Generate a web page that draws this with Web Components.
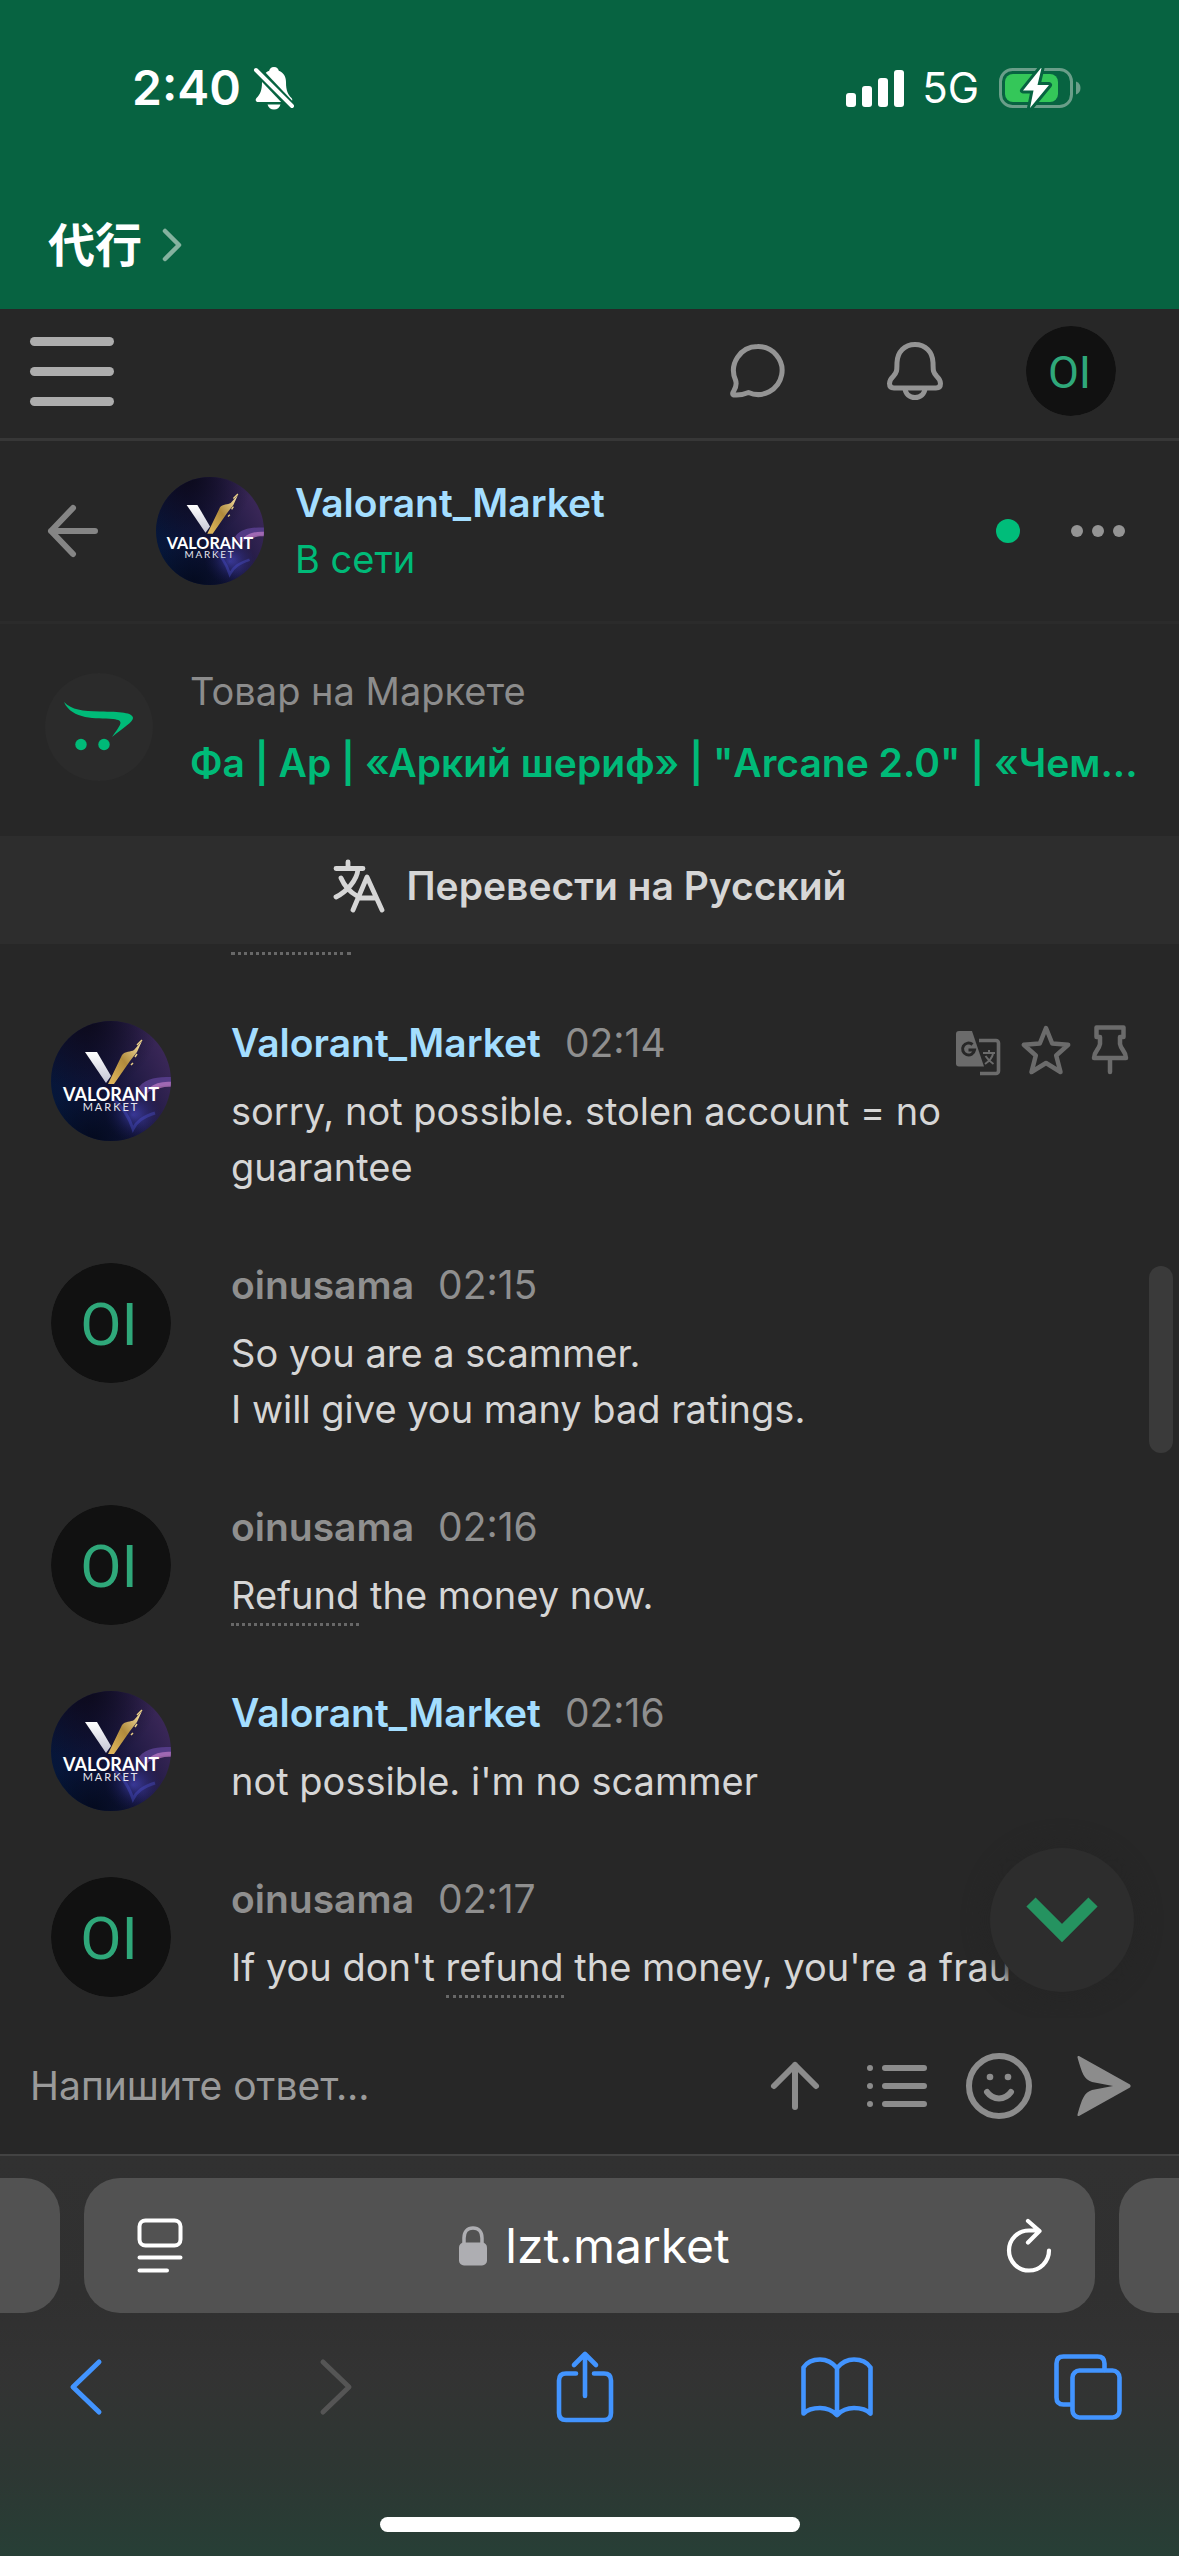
<!DOCTYPE html>
<html lang="ru">
<head>
<meta charset="utf-8">
<meta name="viewport" content="width=device-width, initial-scale=1">
<title>lzt.market</title>
<style>
  html, body { margin: 0; background: #272727; }
  body { font-family: Inter, "Noto Sans CJK JP", sans-serif; font-size: 38px; color: #d6d6d6; }
</style>
</head>
<body>
<market-app></market-app>

<script>
/* Every component writes its own markup and styles into an open shadow root. */
class Base extends HTMLElement {
  connectedCallback() {
    if (this.shadowRoot) return;
    const t = document.createElement('template');
    t.innerHTML = `<style>
      *, *::before { box-sizing: border-box; }
      :host { display: block; }
      button { font: inherit; color: inherit; background: none; border: 0; padding: 0; margin: 0; display: flex; align-items: center; cursor: pointer; }
      a { color: inherit; text-decoration: none; }
      ${this.css()}</style>${this.html()}`;
    this.attachShadow({ mode: 'open' }).append(t.content.cloneNode(true));
  }
  css() { return ''; }
  html() { return '<slot></slot>'; }
}

const line = (w, body) => `<g fill="none" stroke="currentColor" stroke-width="${w}" stroke-linecap="round" stroke-linejoin="round">${body}</g>`;
const ICONS = {
  mute: [42, 44, `<g fill="currentColor"><path d="M21 1c-3 0-4.500 2-4.800 3.800C11.500 6.600 9 10.500 9 16c0 9-2 12.500-5.500 16-1.500 1.600-.8 4 1.500 4h32c2.300 0 3-2.400 1.500-4C35 28.500 33 25 33 16c0-5.500-2.500-9.400-7.200-11.200C25.500 3 24 1 21 1z"/><path d="M14.500 38.500h13c-.8 3-3.300 5-6.500 5s-5.700-2-6.500-5z"/></g><path d="M3 3l36 38" stroke="#076341" stroke-width="9"/><path d="M3 4l36 36" stroke="currentColor" stroke-width="4" stroke-linecap="round"/>`],
  signal: [58, 38, `<g fill="currentColor"><rect y="24" width="10" height="14" rx="3"/><rect x="16" y="17" width="10" height="21" rx="3"/><rect x="32" y="9" width="10" height="29" rx="3"/><rect x="48" y="1" width="10" height="37" rx="3"/></g>`],
  battery: [82, 40, `<rect x="1.500" y="1.500" width="71" height="37" rx="12" fill="none" stroke="#6a9e89" stroke-width="3"/><path d="M77 13.500c3 1 4.500 3.500 4.500 6.500s-1.500 5.500-4.500 6.500z" fill="#6a9e89"/><rect x="6" y="6" width="53" height="28" rx="8" fill="#34c759"/><path d="M42 0L24 22.500h10.500L31 40l19-23H38.500L42.500 0z" fill="currentColor" stroke="#076341" stroke-width="6" stroke-linejoin="round" paint-order="stroke"/>`],
  chevSmall: [20, 34, line(4.500, '<path d="M3 3l14 14L3 31"/>')],
  menu: [84, 69, `<g fill="currentColor"><rect width="84" height="9" rx="4.500"/><rect y="30" width="84" height="9" rx="4.500"/><rect y="60" width="84" height="9" rx="4.500"/></g>`],
  chat: [54, 54, line(5, '<path d="M27.500 2.500A24 24 0 1 1 18.500 48.500C15 50 10 51.500 4 51 2 50.500 2.500 49 4 46.500 6 43 7 40 5.500 36A24 24 0 0 1 27.500 2.500z"/>')],
  bell: [56, 58, line(5, '<path d="M28 2.500c-10.500 0-17.500 7.500-18 18-.3 7.500.5 9-3.500 13.500C3 37.500 2.500 39.500 2.500 41.500c0 3 1.800 4.500 4.500 4.500h42c2.700 0 4.500-1.500 4.500-4.500 0-2-.5-4-4-7.500-4-4.500-3.200-6-3.500-13.500-.5-10.500-7.500-18-18-18z"/><path d="M18 46.500c.5 5.500 4.500 9 10 9s9.500-3.500 10-9"/>')],
  back: [52, 52, line(6, '<path d="M48 26H4M26 3L4 26l22 23"/>')],
  more: [54, 12, '<g fill="currentColor"><circle cx="6" cy="6" r="6"/><circle cx="27" cy="6" r="6"/><circle cx="48" cy="6" r="6"/></g>'],
  cart: [70, 50, '<g fill="currentColor"><path d="M0 0c8 8 18 9 36 9.500 20 .3 33 1 33 6.500 0 4-9 9-21 19 9-13 13-16.500 1-18C32 16 8 18 0 0z"/><circle cx="17" cy="42.500" r="5.700"/><circle cx="40" cy="42.500" r="5.700"/></g>'],
  lang: [52, 54, line(4.800, '<path d="M3 9.500h27M15 3v6M25 10C24 22 13 33 3 38M8 19c3 7 9 14 16 18M20 51L34 18l15 33M26 39h17"/>')],
  gtrans: [44, 44, `<path d="M3 0h13l12 35.500H3a3 3 0 0 1-3-3V3a3 3 0 0 1 3-3z" fill="currentColor"/><path d="M16.500 13.500a6 6 0 1 0 2 5.500H12.500" fill="none" stroke="#272727" stroke-width="3"/><path d="M23 9.500h17a2.500 2.500 0 0 1 2.500 2.500v28a2.500 2.500 0 0 1-2.500 2.500H24" fill="none" stroke="currentColor" stroke-width="3.600"/><path d="M27 22h12M33 19v3M37 23c-1 4-5 8-8 10M29.500 25c2 3 5 6 8 8" fill="none" stroke="currentColor" stroke-width="2"/>`],
  star: [50, 50, line(4.500, '<path d="M25 3l6.200 15.500 16 1.300-12 10.700 4.300 16.500L25 38 10.500 47l4.300-16.500-12-10.700 16-1.300z"/>')],
  pin: [36, 50, line(4.500, '<path d="M4.500 2.500h27V12H28v7c1 6 6 7 6 14H2c0-7 5-8 6-14v-7H4.500zM18 33v14"/>')],
  down: [74, 46, '<path d="M6 5l31 31L68 5" fill="none" stroke="currentColor" stroke-width="13"/>'],
  up: [48, 50, line(6, '<path d="M24 46V4M3 25L24 4l21 21"/>')],
  list: [60, 42, line(6, '<path d="M18 3h39M18 21h39M18 39h39M3 3h0M3 21h0M3 39h0"/>')],
  smile: [66, 66, line(6, '<circle cx="33" cy="33" r="30"/><path d="M21 39c6 8.500 18 8.500 24 0"/>') + '<g fill="currentColor"><circle cx="24" cy="24" r="3.300"/><circle cx="42" cy="24" r="3.300"/></g>'],
  send: [54, 62, '<path d="M2 1L53 29.500q1.500 1.500 0 3L2 61q-2 .5-1.500-1.500C5 44 7 37.500 15 35l21-4-21-4C7 24.500 5 18 .5 2.500Q0 .5 2 1z" fill="currentColor"/>'],
  page: [46, 56, line(4, '<rect x="2.500" y="2.500" width="41" height="25" rx="6"/><path d="M2.500 39.500h41M2.500 52.500H30"/>')],
  lock: [28, 40, '<rect y="16.500" width="28" height="23" rx="5" fill="currentColor"/><path d="M5 18v-6c0-6 3.500-10 9-10s9 4 9 10v6" fill="none" stroke="currentColor" stroke-width="3.500"/>'],
  reload: [46, 56, line(4.200, '<path d="M43 32.500A20 20 0 1 1 23 12.500H33M22 3l11.500 10L22 24.500"/>')],
  prev: [34, 56, line(5, '<path d="M30 3L4 28l26 25"/>')],
  next: [34, 56, line(5, '<path d="M4 3l26 25L4 53"/>')],
  share: [58, 72, line(4.600, '<path d="M20 22.500H10q-7 0-7 7v32.500q0 7 7 7h38q7 0 7-7V29.500q0-7-7-7H38M29 45V3M18 14L29 3l11 11"/>')],
  book: [72, 60, line(4.600, '<path d="M36 11C31 5 26 2.500 19 2.500S6 5 2.500 10.500v46C6 53 12 51 19 51s12 2 17 7c5-5 10-7 17-7s13 2 16.500 5.500v-46C66 5 60 2.500 53 2.500S41 5 36 11zM36 11v46"/>')],
  tabs: [68, 66, line(4.600, '<rect x="18.500" y="16.500" width="47" height="47" rx="7"/><path d="M50.500 16V9.500q0-7-7-7h-34q-7 0-7 7v34q0 7 7 7h8"/>')]
};

customElements.define('ui-icon', class extends Base {
  css() {
    const [w, h] = ICONS[this.getAttribute('name')];
    return `:host { display: block; flex: none; width: ${w}px; height: ${h}px; } svg { display: block; overflow: visible; }`;
  }
  html() {
    const [w, h, body] = ICONS[this.getAttribute('name')];
    return `<svg width="${w}" height="${h}" viewBox="0 0 ${w} ${h}" aria-hidden="true">${body}</svg>`;
  }
});

customElements.define('user-avatar', class extends Base {
  css() {
    return `:host { flex: none; width: var(--size, 120px); height: var(--size, 120px); border-radius: 50%; overflow: hidden; }
      svg { display: block; width: 100%; height: 100%; }`;
  }
  html() {
    if (this.getAttribute('kind') === 'self') {
      return `<svg viewBox="0 0 120 120" role="img" aria-label="oinusama"><circle cx="60" cy="60" r="60" fill="#111"/>
        <text x="58" y="82" text-anchor="middle" font-family="Roboto, sans-serif" font-size="60" fill="#2fa87a">OI</text></svg>`;
    }
    return `<svg viewBox="0 0 120 120" role="img" aria-label="Valorant Market">
      <defs>
        <linearGradient id="bg" x1="0" y1=".7" x2="1" y2=".2"><stop offset="0" stop-color="#04173a"/><stop offset=".45" stop-color="#121338"/><stop offset="1" stop-color="#402a5c"/></linearGradient>
        <radialGradient id="dark" cx=".3" cy="0" r=".6"><stop offset="0" stop-color="#0c0a1c"/><stop offset="1" stop-color="#0c0a1c" stop-opacity="0"/></radialGradient>
        <radialGradient id="blue" cx=".5" cy=".5" r=".5"><stop offset="0" stop-color="#4a48c0" stop-opacity=".8"/><stop offset="1" stop-color="#2b2a80" stop-opacity="0"/></radialGradient>
        <radialGradient id="floor" cx=".35" cy="1" r=".45"><stop offset="0" stop-color="#040a1e"/><stop offset="1" stop-color="#040a1e" stop-opacity="0"/></radialGradient>
        <linearGradient id="sil" x1="0" y1="0" x2="0" y2="1"><stop offset="0" stop-color="#fff"/><stop offset="1" stop-color="#c4c5d4"/></linearGradient>
        <linearGradient id="gold" x1="0" y1="1" x2="1" y2="0"><stop offset="0" stop-color="#e6bd60"/><stop offset=".5" stop-color="#b08a3c"/><stop offset="1" stop-color="#fbe7ab"/></linearGradient>
      </defs>
      <rect width="120" height="120" fill="url(#bg)"/><rect width="120" height="120" fill="url(#dark)"/>
      <ellipse cx="82" cy="94" rx="28" ry="26" fill="url(#blue)"/>
      <rect width="120" height="120" fill="url(#floor)"/>
      <path d="M88 66c8-10 20-10 34-10v9c-12-2-22 2-28 10z" fill="#5c4194" opacity=".8"/>
      <path d="M98 67c6-5 14-7 24-6v5c-8-1-14 1-20 4z" fill="#c07cc6" opacity=".7"/>
      <path d="M62 78c10 8 16 18 20 30 4-8 10-12 22-16" fill="none" stroke="#4c4fd0" stroke-width="3" opacity=".4"/>
      <path d="M34 31h12l14 24-5 7z" fill="url(#sil)"/>
      <path d="M57 63l14-29c3-4 9-3 12-5l8-9-5 11-7 9-16 23z" fill="url(#gold)"/>
      <path d="M86 24l5-5M84 36l2-3M80 44l2-2" stroke="#e9cf86" stroke-width="1.500"/>
      <text x="60" y="80" text-anchor="middle" font-family="Lato, sans-serif" font-weight="700" font-size="18" fill="#fff">VALORANT</text>
      <text x="60" y="90" text-anchor="middle" font-family="Lato, sans-serif" font-size="11" letter-spacing="2" fill="#e6e6ee">MARKET</text>
    </svg>`;
  }
});

customElements.define('status-bar', class extends Base {
  css() {
    return `:host { background: #076341; color: #fff; }
      .row { display: flex; align-items: center; justify-content: space-between; padding: 57px 98px 0 132px; line-height: 62px; }
      .side { display: flex; align-items: center; }
      time { font-size: 48px; font-weight: 600; margin-right: 12px; }
      .net { font-size: 42px; margin: 0 20px 0 18px; line-height: 62px; }
      .app { padding: 90px 0 28px 48px; font-size: 47px; font-weight: 700; line-height: 72px; gap: 20px; box-sizing: content-box; }
      .app ui-icon { color: #85b29f; }`;
  }
  html() {
    return `<div class="row"><div class="side"><time>2:40</time><ui-icon name="mute"></ui-icon></div>
      <div class="side"><ui-icon name="signal"></ui-icon><span class="net">5G</span><ui-icon name="battery"></ui-icon></div></div>
      <button class="app"><span>代行</span><ui-icon name="chevSmall"></ui-icon></button>`;
  }
});

customElements.define('site-header', class extends Base {
  css() {
    return `:host { border-bottom: 3px solid #373737; color: #949494; }
      header { display: flex; align-items: center; justify-content: space-between; height: 129px; padding: 0 63px 5px 30px; }
      nav { display: flex; align-items: center; }
      .menu { color: #adadad; } .bell { margin: 0 83px 0 103px; }
      user-avatar { --size: 90px; }`;
  }
  html() {
    return `<header><button class="menu" aria-label="Меню"><ui-icon name="menu"></ui-icon></button>
      <nav><button aria-label="Чаты"><ui-icon name="chat"></ui-icon></button>
      <button class="bell" aria-label="Уведомления"><ui-icon name="bell"></ui-icon></button>
      <a href="#"><user-avatar kind="self"></user-avatar></a></nav></header>`;
  }
});

customElements.define('chat-header', class extends Base {
  css() {
    return `:host { border-bottom: 3px solid #2b2b2b; }
      header { display: flex; align-items: center; height: 180px; padding: 0 54px 0 47px; }
      .back { color: #858585; margin-right: 57px; }
      user-avatar { --size: 108px; margin-right: 31px; }
      .who { flex: 1; line-height: 57px; }
      .who a { display: block; color: #a4deff; font-size: 39px; font-weight: 600; }
      .who span { color: #00ba78; }
      i { width: 24px; height: 24px; border-radius: 50%; background: #00bd7a; margin-right: 51px; }
      .more { color: #949494; }`;
  }
  html() {
    return `<header><button class="back" aria-label="Назад"><ui-icon name="back"></ui-icon></button>
      <user-avatar></user-avatar><div class="who"><a href="#">Valorant_Market</a><span>В сети</span></div>
      <i></i><button class="more" aria-label="Ещё"><ui-icon name="more"></ui-icon></button></header>`;
  }
});

customElements.define('item-card', class extends Base {
  css() {
    return `:host { padding: 31px 40px 37px 45px; }
      article { display: flex; align-items: center; }
      .ic { flex: none; width: 108px; height: 108px; border-radius: 50%; background: #2b2b2b; color: #00ba78; display: grid; place-items: center; margin-right: 37px; }
      .tx { flex: 1; min-width: 0; line-height: 72px; }
      .tx span { display: block; color: #8c8c8c; }
      .tx a { display: block; color: #00ba78; font-size: 39px; font-weight: 600; white-space: nowrap; overflow: hidden; text-overflow: ellipsis; }`;
  }
  html() {
    return `<article><div class="ic"><ui-icon name="cart"></ui-icon></div><div class="tx"><span>Товар на Маркете</span>
      <a href="#">Фа | Ар | «Аркий шериф» | "Arcane 2.0" | «Чем...</a></div></article>`;
  }
});

customElements.define('translate-bar', class extends Base {
  css() {
    return `button { width: 100%; height: 108px; justify-content: center; gap: 22px; padding-bottom: 8px; background: #2d2d2d; color: #d6d6d6; font-size: 39px; font-weight: 600; line-height: 56px; }`;
  }
  html() { return `<button><ui-icon name="lang"></ui-icon><span>Перевести на Русский</span></button>`; }
});

/* A word that has a dictionary hint */
customElements.define('hint-word', class extends Base {
  css() { return `:host { display: inline; border-bottom: 3px dotted #686868; padding-bottom: 5px; }`; }
});

customElements.define('chat-message', class extends Base {
  css() {
    return `:host { display: flex; align-items: flex-start; gap: 60px; padding: 0 51px; }
      .body { flex: 1; min-width: 0; padding-bottom: 2px; }
      header { display: flex; align-items: center; gap: 24px; height: 44px; font-size: 39px; line-height: 44px; margin-bottom: 18px; color: #8f8f8f; }
      b { font-weight: 600; }
      .seller { color: #a4deff; }
      .tools { display: flex; gap: 21px; margin-left: auto; color: #6b6b6b; align-items: flex-end; padding-top: 14px; }
      p { margin: 0; line-height: 56px; padding-right: 80px; }
      .nowrap { white-space: nowrap; padding: 0; }`;
  }
  html() {
    const self = this.getAttribute('author') === 'oinusama';
    const tools = this.hasAttribute('tools') ? `<div class="tools"><button aria-label="Перевести"><ui-icon name="gtrans"></ui-icon></button>
      <button aria-label="В избранное"><ui-icon name="star"></ui-icon></button><button aria-label="Закрепить"><ui-icon name="pin"></ui-icon></button></div>` : '';
    return `<user-avatar kind="${self ? 'self' : 'seller'}"></user-avatar><div class="body">
      <header><b class="${self ? '' : 'seller'}">${this.getAttribute('author')}</b><time>${this.getAttribute('time')}</time>${tools}</header>
      <p class="${this.hasAttribute('single') ? 'nowrap' : ''}"><slot></slot></p></div>`;
  }
});

customElements.define('message-list', class extends Base {
  css() {
    return `:host { position: relative; min-height: 0; overflow: hidden; }
      .tail { width: 120px; height: 11px; margin-left: 231px; border-bottom: 3px dotted #686868; }
      .list { display: flex; flex-direction: column; gap: 66px; padding-top: 66px; }
      .thumb { position: absolute; right: 6px; top: 30%; width: 24px; height: 187px; border-radius: 12px; background: #3a3a3a; }
      .down { position: absolute; right: 45px; bottom: 26px; width: 144px; height: 144px; border-radius: 50%; background: #2d2d2d; color: #259360; justify-content: center; box-shadow: 0 0 20px 6px #262626; }`;
  }
  html() {
    return `<div class="tail"></div><div class="list"><slot></slot></div><div class="thumb"></div>
      <button class="down" aria-label="Вниз"><ui-icon name="down"></ui-icon></button>`;
  }
});

customElements.define('message-composer', class extends Base {
  css() {
    return `form { display: flex; align-items: center; height: 136px; padding: 0 48px 0 30px; margin: 0; color: #8c8c8c; }
      input { flex: 1; min-width: 0; font: inherit; font-size: 39px; color: #d6d6d6; background: none; border: 0; outline: 0; padding: 0; line-height: 56px; }
      input::placeholder { color: #9a9a9a; opacity: 1; }
      .tools { display: flex; align-items: center; }
      .list { margin: 0 39px 0 48px; }
      .send { margin-left: 45px; }`;
  }
  html() {
    return `<form><input type="text" aria-label="Напишите ответ" placeholder="Напишите ответ..."><div class="tools">
      <button type="button" aria-label="Прикрепить"><ui-icon name="up"></ui-icon></button>
      <button type="button" class="list" aria-label="Список"><ui-icon name="list"></ui-icon></button>
      <button type="button" aria-label="Смайлы"><ui-icon name="smile"></ui-icon></button>
      <button type="button" class="send" aria-label="Отправить"><ui-icon name="send"></ui-icon></button></div></form>`;
  }
});

customElements.define('browser-bar', class extends Base {
  css() {
    return `:host { border-top: 2px solid #434343; background: linear-gradient(#313131, #303030 35%, #333 55%, #2d3733 80%, #273f36); }
      .tabs { display: flex; gap: 24px; padding-top: 22px; }
      .peek { flex: none; width: 60px; height: 135px; background: #525252; border-radius: 0 36px 36px 0; }
      .peek.r { border-radius: 36px 0 0 36px; }
      .url { flex: 1; display: flex; align-items: center; justify-content: space-between; height: 135px; padding: 0 43px 0 53px; border-radius: 36px; background: #525252; color: #fff; }
      .host { font-size: 48px; gap: 18px; line-height: 60px; }
      .host ui-icon { color: #aeaeb2; }
      nav { display: flex; align-items: center; justify-content: space-between; padding: 37px 57px 0 52px; height: 110px; color: #4294ff; }
      nav button { min-width: 68px; justify-content: center; }
      .off { color: #555; }
      .home { width: 420px; height: 15px; border-radius: 8px; background: #fff; margin: 94px auto 24px; }`;
  }
  html() {
    return `<div class="tabs"><div class="peek"></div><div class="url">
      <button aria-label="Меню страницы"><ui-icon name="page"></ui-icon></button>
      <button class="host"><ui-icon name="lock"></ui-icon><span>lzt.market</span></button>
      <button aria-label="Обновить"><ui-icon name="reload"></ui-icon></button></div><div class="peek r"></div></div>
      <nav><button aria-label="Назад"><ui-icon name="prev"></ui-icon></button>
      <button class="off" disabled aria-label="Вперёд"><ui-icon name="next"></ui-icon></button>
      <button aria-label="Поделиться"><ui-icon name="share"></ui-icon></button>
      <button aria-label="Закладки"><ui-icon name="book"></ui-icon></button>
      <button aria-label="Вкладки"><ui-icon name="tabs"></ui-icon></button></nav>
      <div class="home"></div>`;
  }
});

customElements.define('market-app', class extends Base {
  css() { return `:host { display: grid; grid-template-rows: repeat(5, auto) 1fr auto auto; height: 100vh; overflow: hidden; }`; }
  html() {
    return `<status-bar></status-bar><site-header></site-header><chat-header></chat-header><item-card></item-card><translate-bar></translate-bar>
      <message-list>
        <chat-message author="Valorant_Market" time="02:14" tools>sorry, not possible. stolen account = no guarantee</chat-message>
        <chat-message author="oinusama" time="02:15">So you are a scammer.<br>I will give you many bad ratings.</chat-message>
        <chat-message author="oinusama" time="02:16"><hint-word>Refund</hint-word> the money now.</chat-message>
        <chat-message author="Valorant_Market" time="02:16">not possible. i'm no scammer</chat-message>
        <chat-message author="oinusama" time="02:17" single>If you don't <hint-word>refund</hint-word> the money, you're a frau</chat-message>
      </message-list>
      <message-composer></message-composer><browser-bar></browser-bar>`;
  }
});
</script>
</body>
</html>
